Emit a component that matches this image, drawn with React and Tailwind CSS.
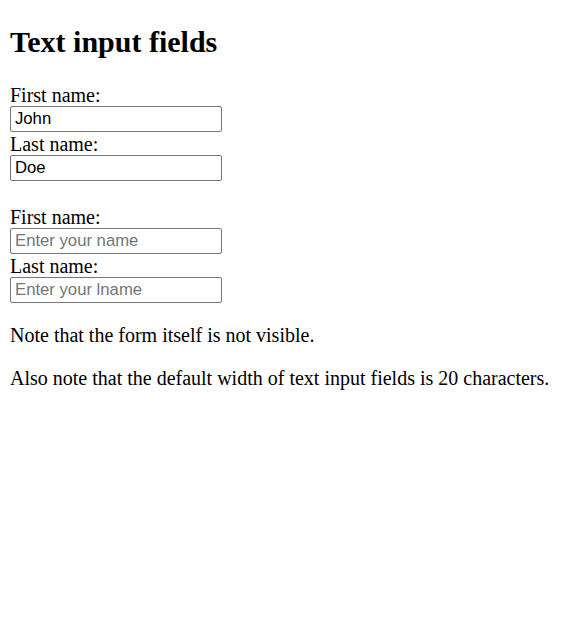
import React from "react";

const Field = ({ label, value, placeholder }) => (
  <>
    <label className="block h-[21px] leading-[21px]">{label}</label>
    <input
      type="text"
      defaultValue={value}
      placeholder={placeholder}
      className="block w-[212px] h-[26px] mb-[2px] px-[4px] border border-[#767676] rounded-[2px] text-[16.7px] text-black placeholder:text-[#757575] font-['Liberation_Sans',Arial,sans-serif]"
    />
  </>
);

const App = () => {
  return (
    <div className="min-h-[626px] bg-white px-[10px] text-[20px] text-black font-['Liberation_Serif','Times_New_Roman',serif]">
      <h1 className="pt-[26px] text-[30px] leading-[32px] font-bold">Text input fields</h1>
      <form className="mt-[27px]">
        <Field label="First name:" value="John" />
        <Field label="Last name:" value="Doe" />
      </form>
      <form className="mt-[26px]">
        <Field label="First name:" placeholder="Enter your name" />
        <Field label="Last name:" placeholder="Enter your lname" />
      </form>
      <p className="mt-[21px] leading-[23px]">Note that the form itself is not visible.</p>
      <p className="mt-[20px] leading-[23px]">
        Also note that the default width of text input fields is 20 characters.
      </p>
    </div>
  );
};

export default App;
